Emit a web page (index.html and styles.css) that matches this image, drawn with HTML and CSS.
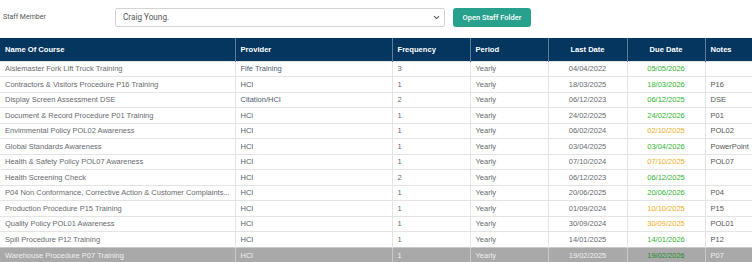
FILE: index.html
```html
<!DOCTYPE html>
<html>
<head>
<meta charset="utf-8">
<link rel="stylesheet" href="styles.css">
</head>
<body>
<div class="toolbar">
  <label class="staff-label">Staff Member</label>
  <div class="select">
    <span class="select-value">Craig Young.</span>
    <svg class="chev" width="7" height="5" viewBox="0 0 7 5"><path d="M1 1.2 L3.5 3.6 L6 1.2" fill="none" stroke="#555" stroke-width="1.1"/></svg>
  </div>
  <button class="btn">Open Staff Folder</button>
</div>
<table class="grid">
  <colgroup>
    <col style="width:235px"><col style="width:157px"><col style="width:78px"><col style="width:78px"><col style="width:79px"><col style="width:78px"><col style="width:47px">
  </colgroup>
  <thead>
    <tr><th>Name Of Course</th><th>Provider</th><th>Frequency</th><th>Period</th><th class="c">Last Date</th><th class="c">Due Date</th><th>Notes</th></tr>
  </thead>
  <tbody>
    <tr><td>Aislemaster Fork Lift Truck Training</td><td class="prov">Fife Training</td><td>3</td><td>Yearly</td><td class="c">04/04/2022</td><td class="c ok">05/05/2026</td><td class="note"></td></tr>
    <tr><td>Contractors &amp; Visitors Procedure P16 Training</td><td class="prov">HCI</td><td>1</td><td>Yearly</td><td class="c">18/03/2025</td><td class="c ok">18/03/2026</td><td class="note">P16</td></tr>
    <tr><td>Display Screen Assessment DSE</td><td class="prov">Citation/HCI</td><td>2</td><td>Yearly</td><td class="c">06/12/2023</td><td class="c ok">06/12/2025</td><td class="note">DSE</td></tr>
    <tr><td>Document &amp; Record Procedure P01 Training</td><td class="prov">HCi</td><td>1</td><td>Yearly</td><td class="c">24/02/2025</td><td class="c ok">24/02/2026</td><td class="note">P01</td></tr>
    <tr><td>Envimmental Policy POL02 Awareness</td><td class="prov">HCI</td><td>1</td><td>Yearly</td><td class="c">06/02/2024</td><td class="c warn">02/10/2025</td><td class="note">POL02</td></tr>
    <tr><td>Global Standards Awareness</td><td class="prov">HCI</td><td>1</td><td>Yearly</td><td class="c">03/04/2025</td><td class="c ok">03/04/2026</td><td class="note">PowerPoint</td></tr>
    <tr><td>Health &amp; Safety Policy POL07 Awareness</td><td class="prov">HCI</td><td>1</td><td>Yearly</td><td class="c">07/10/2024</td><td class="c warn">07/10/2025</td><td class="note">POL07</td></tr>
    <tr><td>Health Screening Check</td><td class="prov">HCI</td><td>2</td><td>Yearly</td><td class="c">06/12/2023</td><td class="c ok">06/12/2025</td><td class="note"></td></tr>
    <tr><td>P04 Non Conformance, Corrective Action &amp; Customer Complaints...</td><td class="prov">HCI</td><td>1</td><td>Yearly</td><td class="c">20/06/2025</td><td class="c ok">20/06/2026</td><td class="note">P04</td></tr>
    <tr><td>Production Procedure P15 Training</td><td class="prov">HCI</td><td>1</td><td>Yearly</td><td class="c">01/09/2024</td><td class="c warn">10/10/2025</td><td class="note">P15</td></tr>
    <tr><td>Quality Policy POL01 Awareness</td><td class="prov">HCi</td><td>1</td><td>Yearly</td><td class="c">30/09/2024</td><td class="c warn">30/09/2025</td><td class="note">POL01</td></tr>
    <tr><td>Spill Procedure P12 Training</td><td class="prov">HCI</td><td>1</td><td>Yearly</td><td class="c">14/01/2025</td><td class="c ok">14/01/2026</td><td class="note">P12</td></tr>
    <tr class="sel"><td>Warehouse Procedure P07 Training</td><td class="prov">HCi</td><td>1</td><td>Yearly</td><td class="c">19/02/2025</td><td class="c ok">19/02/2026</td><td class="note">P07</td></tr>
  </tbody>
</table>
</body>
</html>
```
FILE: styles.css
```css
html, body { margin: 0; padding: 0; background: #fff; }
body { font-family: "Liberation Sans", Arial, sans-serif; width: 752px; overflow: hidden; }

.toolbar {
  display: flex;
  align-items: center;
  height: 34px;
  padding: 0 0 0 3px;
  box-sizing: border-box;
}
.staff-label {
  font-family: Roboto, "Liberation Sans", sans-serif;
  font-size: 7px;
  color: #555;
  width: 112px;
}
.select {
  width: 330px;
  height: 19px;
  border: 1px solid #d4d4d4;
  border-radius: 2px;
  box-sizing: border-box;
  display: flex;
  align-items: center;
  justify-content: space-between;
  padding: 0 4px 0 7px;
}
.select-value {
  font-family: Roboto, "Liberation Sans", sans-serif;
  font-size: 8.2px;
  color: #555;
}
.chev { display: block; }
.btn {
  margin-left: 8px;
  width: 78px;
  height: 19px;
  border: none;
  border-radius: 3px;
  background: #27a08d;
  color: #fff;
  font-family: Roboto, "Liberation Sans", sans-serif;
  font-weight: 500;
  font-size: 7.5px;
  padding: 0;
}

.grid {
  margin-top: 4px;
  border-collapse: collapse;
  table-layout: fixed;
  width: 752px;
}
.grid th {
  background: #04365f;
  color: #fff;
  font-size: 7.6px;
  font-weight: bold;
  text-align: left;
  height: 23px;
  padding: 0 5px;
  box-sizing: border-box;
  border-left: 1px solid #5f7c99;
}
.grid th:first-child { border-left: none; }
.grid td {
  font-size: 7.5px;
  color: #686b6f;
  height: 15.5px;
  padding: 0 5px;
  box-sizing: border-box;
  border-top: 1px solid #e4e4e4;
  border-left: 1px solid #e4e4e4;
  white-space: nowrap;
  overflow: hidden;
}
.grid td:first-child { border-left: none; }
.grid .c { text-align: center; }
.grid td.prov { color: #4e5d70; }
.grid td.note { color: #555; }
.grid td.ok { color: #2fb52f; }
.grid td.warn { color: #f5ab1e; }
.grid tr.sel td { background: #a9a9a9; color: #eee; border-top-color: #c8c8c8; border-left-color: #c8c8c8; }
.grid tr.sel td.ok { color: #1f8f22; }
```
